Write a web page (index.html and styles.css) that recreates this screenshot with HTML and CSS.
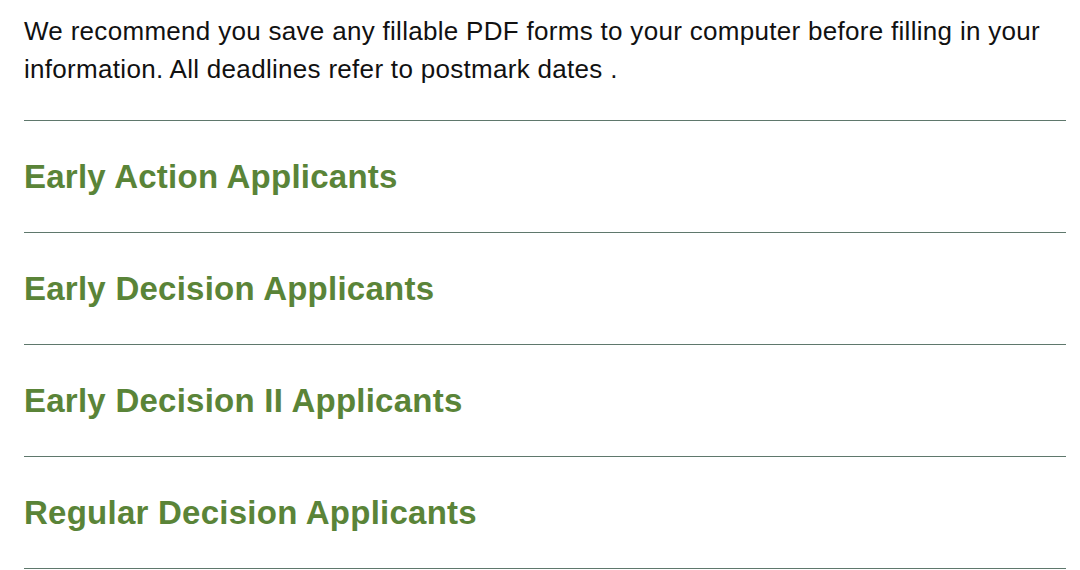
FILE: index.html
```html
<!DOCTYPE html>
<html lang="en">
<head>
<meta charset="utf-8">
<title>Applicant Forms</title>
<link rel="stylesheet" href="styles.css">
</head>
<body>
<main class="page">
  <p class="intro">We recommend you save any fillable PDF forms to your computer before filling in your information. All deadlines refer to postmark dates .</p>
  <ul class="sections">
    <li class="section"><h2 class="section-title">Early Action Applicants</h2></li>
    <li class="section"><h2 class="section-title">Early Decision Applicants</h2></li>
    <li class="section"><h2 class="section-title">Early Decision II Applicants</h2></li>
    <li class="section"><h2 class="section-title">Regular Decision Applicants</h2></li>
  </ul>
</main>
</body>
</html>
```

FILE: styles.css
```css
html, body {
  margin: 0;
  padding: 0;
  background: #ffffff;
}
.page {
  padding: 12px 14px 0 24px;
  font-family: "Liberation Sans", Arial, sans-serif;
}
.intro {
  margin: 0;
  font-size: 26px;
  line-height: 38px;
  letter-spacing: 0.3px;
  color: #111111;
}
.sections {
  list-style: none;
  margin: 32px 0 0 0;
  padding: 0;
}
.section {
  border-top: 1px solid #5f786c;
  height: 111px;
  display: flex;
  align-items: center;
}
.section:last-child {
  border-bottom: 1px solid #5f786c;
}
.section-title {
  margin: 0;
  font-size: 33px;
  font-weight: bold;
  letter-spacing: 0.25px;
  color: #5a8438;
}
```
